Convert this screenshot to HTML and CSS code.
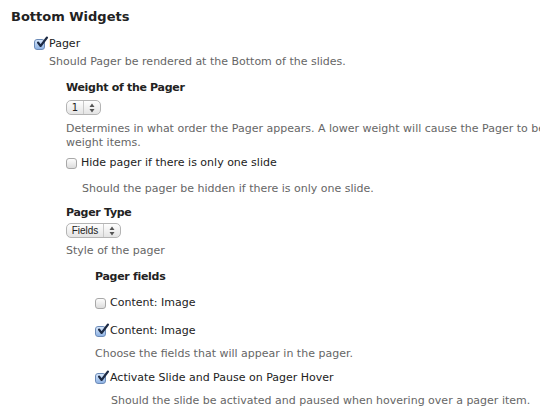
FILE: index.html
```html
<!DOCTYPE html>
<html>
<head>
<meta charset="utf-8">
<link rel="stylesheet" href="styles.css">
</head>
<body>
<div class="page">
  <h2 class="title">Bottom Widgets</h2>
  <div class="level1">
    <label class="check"><span class="box checked"><svg viewBox="0 0 14 14" width="14" height="14"><path d="M3 6.5 L5.6 10 L12 1.5" fill="none" stroke="#1c2a44" stroke-width="2.1" stroke-linecap="round" stroke-linejoin="round"/></svg></span><span class="lbl">Pager</span></label>
    <p class="desc d1">Should Pager be rendered at the Bottom of the slides.</p>
    <div class="level2">
      <h3 class="head h-weight">Weight of the Pager</h3>
      <span class="select s-weight"><span class="val">1</span><span class="arrows"><svg viewBox="0 0 6 10" width="6" height="10"><path d="M3 0.5 L5.5 4 H0.5 Z M3 9.5 L5.5 6 H0.5 Z" fill="#555"/></svg></span></span>
      <div class="desc d-weight clip"><span class="line">Determines in what order the Pager appears. A lower weight will cause the Pager to be above higher</span><span class="line">weight items.</span></div>
      <label class="check c-hide"><span class="box"></span><span class="lbl">Hide pager if there is only one slide</span></label>
      <p class="desc sub d-hide">Should the pager be hidden if there is only one slide.</p>
      <h3 class="head h-type">Pager Type</h3>
      <span class="select s-type"><span class="val">Fields</span><span class="arrows"><svg viewBox="0 0 6 10" width="6" height="10"><path d="M3 0.5 L5.5 4 H0.5 Z M3 9.5 L5.5 6 H0.5 Z" fill="#555"/></svg></span></span>
      <p class="desc d-type">Style of the pager</p>
      <div class="level3">
        <h3 class="head h-fields">Pager fields</h3>
        <label class="check c-f1"><span class="box"></span><span class="lbl">Content: Image</span></label>
        <label class="check c-f2"><span class="box checked"><svg viewBox="0 0 14 14" width="14" height="14"><path d="M3 6.5 L5.6 10 L12 1.5" fill="none" stroke="#1c2a44" stroke-width="2.1" stroke-linecap="round" stroke-linejoin="round"/></svg></span><span class="lbl">Content: Image</span></label>
        <p class="desc d-fields">Choose the fields that will appear in the pager.</p>
        <label class="check c-hover"><span class="box checked"><svg viewBox="0 0 14 14" width="14" height="14"><path d="M3 6.5 L5.6 10 L12 1.5" fill="none" stroke="#1c2a44" stroke-width="2.1" stroke-linecap="round" stroke-linejoin="round"/></svg></span><span class="lbl">Activate Slide and Pause on Pager Hover</span></label>
        <p class="desc sub d-hover">Should the slide be activated and paused when hovering over a pager item.</p>
      </div>
    </div>
  </div>
</div>
</body>
</html>
```
FILE: styles.css
```css
html, body {
  margin: 0;
  padding: 0;
  background: #fff;
  overflow: hidden;
}
body {
  font-family: "DejaVu Sans", Verdana, sans-serif;
  font-size: 11px;
  color: #333;
}
.page {
  padding: 7px 0 0 11px;
  width: 529px;
  overflow: hidden;
}
.title {
  margin: 0;
  font-size: 13px;
  font-weight: bold;
  color: #222;
  line-height: 20px;
}
.level1 {
  padding-left: 23px;
  margin-top: 9px;
}
.level2 {
  padding-left: 32px;
}
.level3 {
  padding-left: 29px;
}
.check {
  display: flex;
  align-items: center;
  height: 16px;
  color: #222;
}
.box {
  position: relative;
  width: 11px;
  height: 11px;
  border: 1px solid #a8a8a8;
  border-radius: 3px;
  background: linear-gradient(#fdfdfd, #dcdcdc);
  box-sizing: border-box;
  margin-right: 4px;
  flex: none;
}
.box.checked {
  border-color: #6c8bb8;
  background: linear-gradient(#d6e6fa, #8fb3e4);
}
.box svg {
  position: absolute;
  left: 0;
  top: -4px;
}
.lbl {
  line-height: 16px;
}
.desc {
  margin: 0;
  color: #666;
  line-height: 14px;
}
.d1 { padding-left: 15px; margin-top: 3px; }
.head {
  margin: 0;
  font-size: 11px;
  letter-spacing: -0.3px;
  font-weight: bold;
  color: #222;
  line-height: 16px;
}
.h-weight { margin-top: 11px; }
.select {
  display: inline-flex;
  align-items: center;
  height: 15px;
  border: 1px solid #b4b4b4;
  border-radius: 5px;
  background: linear-gradient(#fefefe, #e4e4e4);
  box-sizing: border-box;
  font-size: 10px;
  color: #222;
  margin-top: 4px;
  vertical-align: top;
}
.select .arrows {
  display: flex;
  align-items: center;
  height: 13px;
  border-left: 1px solid #c8c8c8;
  padding: 0 5px 0 5px;
}
.select .val {
  flex: 1;
  text-align: center;
  line-height: 13px;
}
.s-weight { width: 35px; }
.s-type { width: 55px; font-family: "Liberation Sans", Arial, sans-serif; margin-top: 2px; }
.clip {
  overflow: hidden;
  white-space: nowrap;
}
.line { display: block; }
.d-weight { margin-top: 7px; }
.c-hide { margin-top: 5px; }
.sub { padding-left: 16px; }
.d-hide { margin-top: 11px; }
.h-type { margin-top: 9px; }
.d-type { margin-top: 6px; }
.h-fields { margin-top: 11px; }
.c-f1 { margin-top: 10px; }
.c-f2 { margin-top: 12px; }
.d-fields { margin-top: 8px; }
.c-hover { margin-top: 9px; }
.d-hover { margin-top: 8px; }
```
